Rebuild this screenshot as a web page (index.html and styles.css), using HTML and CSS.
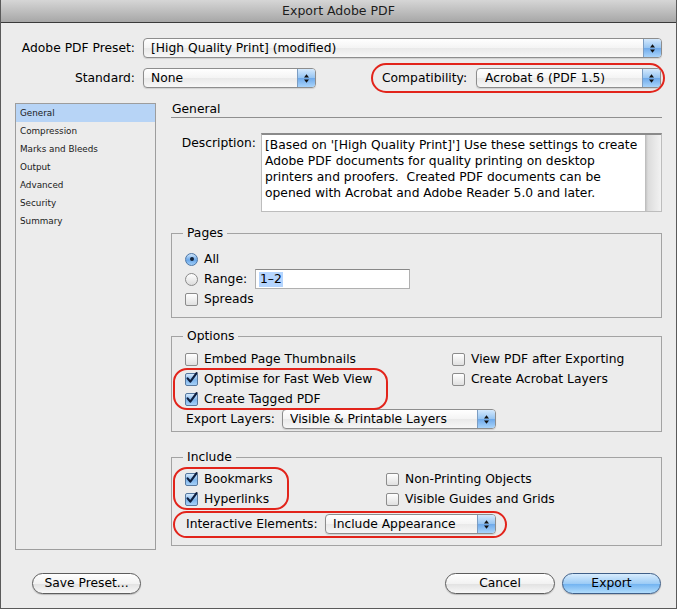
FILE: index.html
```html
<!DOCTYPE html>
<html lang="en">
<head>
<meta charset="utf-8">
<title>Export Adobe PDF</title>
<link rel="stylesheet" href="styles.css">
</head>
<body>
<div class="window">
  <div class="titlebar">Export Adobe PDF</div>
  <div class="content">
    <div class="toprow">
      <span class="lbl-main">Adobe PDF Preset:</span>
      <div class="popup popup-preset">
        <span class="txt">[High Quality Print] (modified)</span>
        <span class="cap"><svg width="7" height="11" viewBox="0 0 7 11"><path d="M3.5 1.2L6 4.6H1Z M3.5 9.8L6 6.4H1Z" fill="#111"/></svg></span>
      </div>
    </div>
    <div class="toprow">
      <span class="lbl-main">Standard:</span>
      <div class="popup popup-standard">
        <span class="txt">None</span>
        <span class="cap"><svg width="7" height="11" viewBox="0 0 7 11"><path d="M3.5 1.2L6 4.6H1Z M3.5 9.8L6 6.4H1Z" fill="#111"/></svg></span>
      </div>
      <div class="compat">
        <span class="compat-lbl">Compatibility:</span>
        <div class="popup popup-compat">
          <span class="txt">Acrobat 6 (PDF 1.5)</span>
          <span class="cap"><svg width="7" height="11" viewBox="0 0 7 11"><path d="M3.5 1.2L6 4.6H1Z M3.5 9.8L6 6.4H1Z" fill="#111"/></svg></span>
        </div>
        <div class="mark mark-compat"></div>
      </div>
    </div>

    <div class="main">
      <ul class="sidebar">
        <li class="sel">General</li>
        <li>Compression</li>
        <li>Marks and Bleeds</li>
        <li>Output</li>
        <li>Advanced</li>
        <li>Security</li>
        <li>Summary</li>
      </ul>

      <div class="panel">
        <div class="heading">General</div>
        <div class="desc">
          <span class="desc-lbl">Description:</span>
          <div class="desc-box">[Based on '[High Quality Print]'] Use these settings to create<br>Adobe PDF documents for quality printing on desktop<br>printers and proofers.&nbsp; Created PDF documents can be<br>opened with Acrobat and Adobe Reader 5.0 and later.</div>
        </div>

        <fieldset class="group group-pages">
          <legend>Pages</legend>
          <div class="row"><span class="radio on"></span>All</div>
          <div class="row"><span class="radio"></span><span class="range-lbl">Range:</span><span class="field"><span class="selected">1–2</span></span></div>
          <div class="row"><span class="cb"></span>Spreads</div>
        </fieldset>

        <fieldset class="group group-options">
          <legend>Options</legend>
          <div class="cols">
            <div class="col-l col-l-options">
              <div class="row"><span class="cb"></span>Embed Page Thumbnails</div>
              <div class="marked marked-optimise">
                <div class="row"><span class="cb on"><svg width="13" height="13" viewBox="0 0 13 13"><path d="M2.6 6.4L5.3 9.6L11.6 1.2" fill="none" stroke="#0e1f3f" stroke-width="2.2" stroke-linecap="round" stroke-linejoin="round"/></svg></span>Optimise for Fast Web View</div>
                <div class="row"><span class="cb on"><svg width="13" height="13" viewBox="0 0 13 13"><path d="M2.6 6.4L5.3 9.6L11.6 1.2" fill="none" stroke="#0e1f3f" stroke-width="2.2" stroke-linecap="round" stroke-linejoin="round"/></svg></span>Create Tagged PDF</div>
              </div>
            </div>
            <div class="col-r">
              <div class="row"><span class="cb"></span>View PDF after Exporting</div>
              <div class="row"><span class="cb"></span>Create Acrobat Layers</div>
            </div>
          </div>
          <div class="row">
            <span class="sel-lbl sel-lbl-layers">Export Layers:</span>
            <div class="popup popup-layers">
              <span class="txt">Visible &amp; Printable Layers</span>
              <span class="cap"><svg width="7" height="11" viewBox="0 0 7 11"><path d="M3.5 1.2L6 4.6H1Z M3.5 9.8L6 6.4H1Z" fill="#111"/></svg></span>
            </div>
          </div>
        </fieldset>

        <fieldset class="group group-include">
          <legend>Include</legend>
          <div class="cols">
            <div class="col-l col-l-include">
              <div class="marked marked-bookmarks">
                <div class="row"><span class="cb on"><svg width="13" height="13" viewBox="0 0 13 13"><path d="M2.6 6.4L5.3 9.6L11.6 1.2" fill="none" stroke="#0e1f3f" stroke-width="2.2" stroke-linecap="round" stroke-linejoin="round"/></svg></span>Bookmarks</div>
                <div class="row"><span class="cb on"><svg width="13" height="13" viewBox="0 0 13 13"><path d="M2.6 6.4L5.3 9.6L11.6 1.2" fill="none" stroke="#0e1f3f" stroke-width="2.2" stroke-linecap="round" stroke-linejoin="round"/></svg></span>Hyperlinks</div>
              </div>
            </div>
            <div class="col-r">
              <div class="row"><span class="cb"></span>Non-Printing Objects</div>
              <div class="row"><span class="cb"></span>Visible Guides and Grids</div>
            </div>
          </div>
          <div class="row row-interactive marked marked-interactive">
            <span class="sel-lbl sel-lbl-interactive">Interactive Elements:</span>
            <div class="popup popup-interactive">
              <span class="txt">Include Appearance</span>
              <span class="cap"><svg width="7" height="11" viewBox="0 0 7 11"><path d="M3.5 1.2L6 4.6H1Z M3.5 9.8L6 6.4H1Z" fill="#111"/></svg></span>
            </div>
          </div>
        </fieldset>
      </div>
    </div>

    <div class="footer">
      <button class="btn btn-save">Save Preset...</button>
      <button class="btn btn-cancel">Cancel</button>
      <button class="btn btn-export">Export</button>
    </div>
  </div>
</div>
</body>
</html>
```

FILE: styles.css
```css
* { box-sizing: border-box; }
html, body { margin: 0; padding: 0; }
body {
  background: #ececec;
  font-family: "DejaVu Sans", "Lucida Grande", sans-serif;
  font-size: 12.3px;
  color: #000;
}
.window {
  width: 677px;
  height: 609px;
  background: #ececec;
  border: 1px solid #5a5a5a;
  border-top: none;
  display: flex;
  flex-direction: column;
  overflow: hidden;
}
.titlebar {
  height: 23px;
  flex: none;
  border-bottom: 1px solid #3a3a3a;
  background: linear-gradient(#d6d6d6, #a7a7a7);
  text-align: center;
  line-height: 22px;
  font-size: 12.5px;
  color: #1c1c1c;
}
.content {
  flex: 1;
  display: flex;
  flex-direction: column;
  padding: 15px 14px 0 14px;
}
.toprow {
  display: flex;
  align-items: center;
  height: 20px;
}
.toprow + .toprow { margin-top: 10px; }
.lbl-main {
  width: 120px;
  flex: none;
  text-align: right;
  margin-right: 8px;
  white-space: nowrap;
}
.popup {
  height: 20px;
  border: 1px solid #8d8d8d;
  border-radius: 4px;
  background: linear-gradient(#ffffff, #f4f4f4 50%, #e9e9e9 51%, #f7f7f7);
  box-shadow: 0 1px 1px rgba(0,0,0,0.12);
  display: flex;
  align-items: center;
  padding-left: 7px;
  flex: none;
}
.popup .txt {
  flex: 1;
  white-space: nowrap;
  overflow: hidden;
}
.popup .cap {
  width: 18px;
  height: 100%;
  flex: none;
  border-left: 1px solid #7c9dc2;
  border-radius: 0 3px 3px 0;
  background: linear-gradient(#d4e9fd, #95c4f2 50%, #6ea9ea 51%, #a9d4fb);
  display: flex;
  align-items: center;
  justify-content: center;
}
.popup-preset { flex: 1; }
.popup-standard { width: 173px; }
.compat {
  position: relative;
  flex: 1;
  display: flex;
  align-items: center;
  margin-left: 55px;
  padding-left: 11px;
  height: 20px;
}
.compat-lbl { width: 94px; flex: none; white-space: nowrap; }
.popup-compat { flex: 1; margin-right: 1px; padding-left: 8px; }
.mark {
  position: absolute;
  border: 2.5px solid #e2241b;
  pointer-events: none;
}
.mark-compat {
  left: 0;
  right: -3px;
  top: -5px;
  bottom: -5px;
  border-radius: 16px;
}

.main {
  display: flex;
  margin-top: 15px;
  height: 447px;
  flex: none;
}
.sidebar {
  width: 141px;
  flex: none;
  margin: 0;
  padding: 0;
  list-style: none;
  border: 1px solid #9d9d9d;
  font-size: 8.8px;
  color: #1a1a1a;
}
.sidebar li {
  height: 18px;
  line-height: 18px;
  padding-left: 4px;
}
.sidebar li.sel { background: #b7d4f6; }

.panel {
  flex: 1;
  margin-left: 15px;
  display: flex;
  flex-direction: column;
}
.heading {
  height: 15px;
  line-height: 12px;
  padding-left: 1px;
  border-bottom: 1px solid #8f8f8f;
}
.desc {
  display: flex;
  margin-top: 15px;
}
.desc-lbl {
  width: 85px;
  flex: none;
  text-align: right;
  margin-right: 5px;
  line-height: 20px;
}
.desc-box {
  flex: 1;
  height: 79px;
  border: 1px solid #bdbdbd;
  border-top: 2px solid #8a8a8a;
  padding: 2px 4px 0 3px;
  line-height: 16px;
  white-space: nowrap;
  overflow: hidden;
  background: linear-gradient(to right, #fff calc(100% - 16px), #b9b9b9 calc(100% - 16px), #dcdcdc calc(100% - 13px), #f2f2f2 100%);
}

.group {
  margin: 0;
  border: 1px solid #a3a3a3;
  min-width: 0;
}
.group legend {
  margin-left: -2px;
  padding: 0 4px;
  line-height: 14px;
  height: 14px;
}
.group-pages { margin-top: 14px; padding: 9px 13px 8px 13px; }
.group-options { margin-top: 11px; padding: 6px 13px 2px 13px; }
.group-include { margin-top: 18px; padding: 5px 13px 11px 13px; }

.row {
  height: 20px;
  display: flex;
  align-items: center;
  white-space: nowrap;
}
.cols { display: flex; }
.col-l-options { width: 267px; flex: none; }
.col-l-include { width: 201px; flex: none; }

.radio {
  width: 13px;
  height: 13px;
  flex: none;
  border-radius: 50%;
  border: 1px solid #8a8a8a;
  background: linear-gradient(#ffffff, #dcdcdc);
  margin-right: 6px;
  position: relative;
}
.radio.on {
  border-color: #4e77a6;
  background: linear-gradient(#cfe6fc, #6ba7e8 55%, #9fcdf7);
}
.radio.on::after {
  content: "";
  position: absolute;
  left: 3.5px;
  top: 3.5px;
  width: 4px;
  height: 4px;
  border-radius: 50%;
  background: #14243a;
}
.range-lbl { width: 51px; flex: none; }
.field {
  width: 155px;
  height: 20px;
  border: 1px solid #b0b0b0;
  border-top-color: #888;
  background: #fff;
  padding: 2px 3px;
  display: flex;
  align-items: center;
}
.selected {
  background: #b5d5fe;
  line-height: 15px;
  padding: 0 1px;
}
.cb {
  width: 13px;
  height: 13px;
  flex: none;
  border: 1px solid #8c8c8c;
  border-radius: 2px;
  background: linear-gradient(#ffffff, #e0e0e0);
  margin-right: 6px;
  position: relative;
}
.cb.on {
  border-color: #56789f;
  background: linear-gradient(#d6eafd, #80b6ec 55%, #a6d0f8);
}
.cb svg {
  position: absolute;
  left: -1px;
  top: -2px;
  overflow: visible;
}
.marked { position: relative; }
.marked::after {
  content: "";
  position: absolute;
  border: 2.5px solid #e2241b;
  pointer-events: none;
}
.marked-optimise::after {
  left: -12px;
  width: 211px;
  top: -1px;
  bottom: -1px;
  border-radius: 14px;
}
.marked-bookmarks::after {
  left: -12px;
  width: 112px;
  top: -2px;
  bottom: -1px;
  border-radius: 14px;
}
.marked-interactive::after {
  left: -12px;
  width: 330px;
  top: -3px;
  bottom: -4px;
  border-radius: 14px;
}
.sel-lbl { flex: none; padding-left: 1px; }
.sel-lbl-layers { width: 97px; }
.sel-lbl-interactive { width: 140px; }
.popup-layers { width: 214px; }
.popup-interactive { width: 171px; }
.row-interactive { margin-top: 5px; }

.footer {
  display: flex;
  margin-top: 23px;
  padding-left: 17px;
  padding-right: 1px;
}
.btn {
  height: 21px;
  border-radius: 11px;
  border: 1px solid #5d5d5d;
  background: linear-gradient(#ffffff, #f2f2f2 50%, #e1e1e1 51%, #f8f8f8);
  box-shadow: 0 1px 1px rgba(0,0,0,0.2);
  font-family: inherit;
  font-size: 12.3px;
  line-height: 19px;
  color: #000;
  padding: 0;
  text-align: center;
}
.btn-save { width: 109px; }
.btn-cancel { width: 110px; margin-left: auto; }
.btn-export {
  width: 99px;
  margin-left: 7px;
  border-color: #3f5f88;
  background: linear-gradient(#d8ecfd, #9dccf6 50%, #6fb1f0 51%, #b2ddfc);
}
```
